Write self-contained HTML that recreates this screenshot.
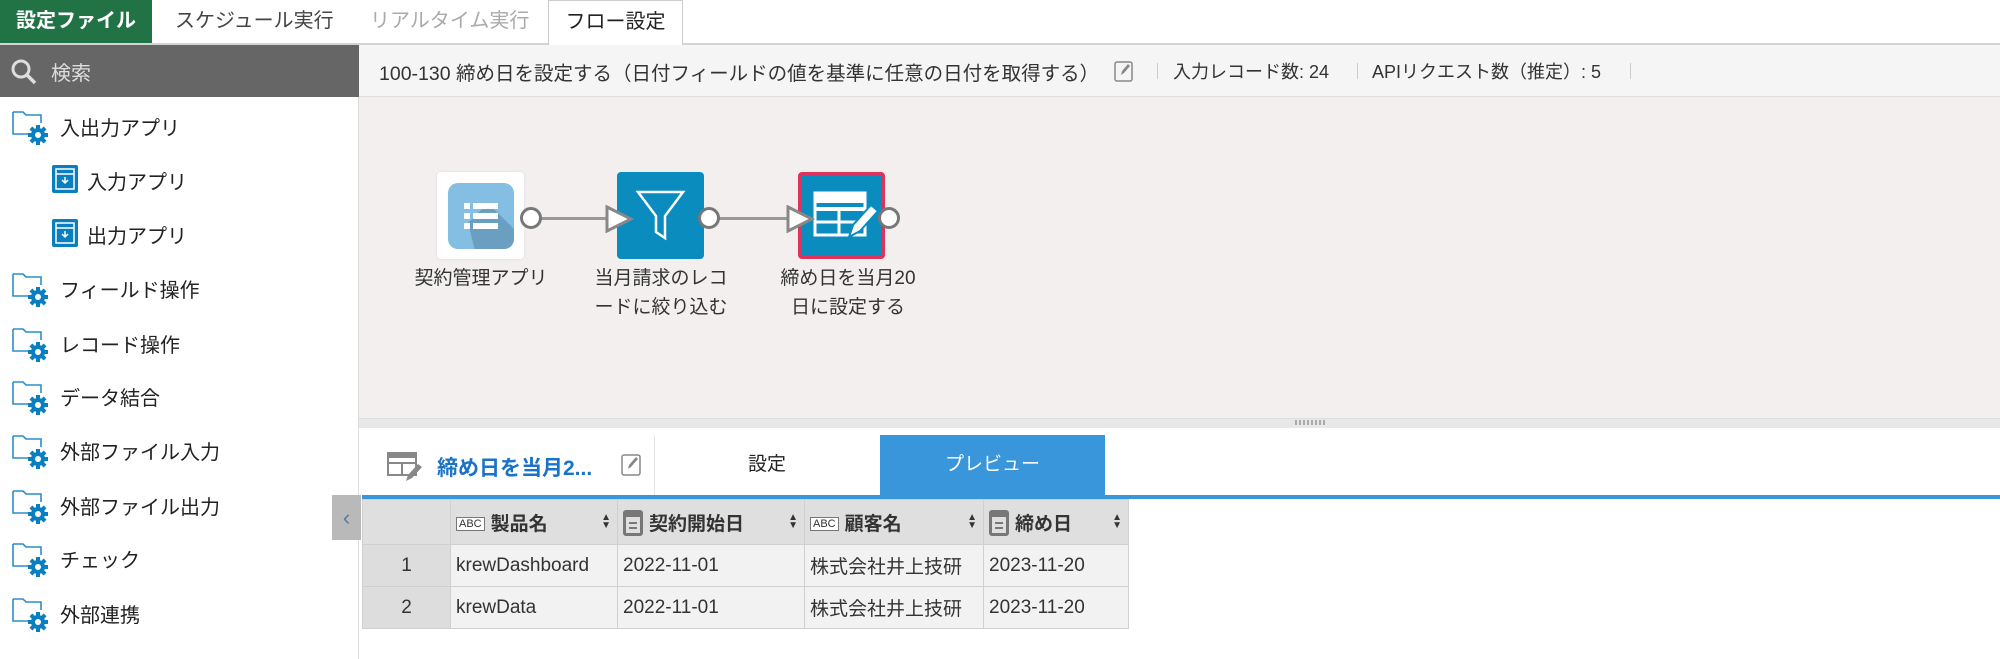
<!DOCTYPE html>
<html><head><meta charset="utf-8"><style>
*{box-sizing:border-box;margin:0;padding:0}
body{width:2000px;height:659px;overflow:hidden;background:#fff;font-family:"Liberation Sans","Noto Sans CJK JP",sans-serif;color:#222;position:relative}
.a{position:absolute;white-space:nowrap}
.tabbar{left:0;top:0;width:2000px;height:45px;background:#fff;border-bottom:2px solid #d4d4d4}
.side{left:0;top:45px;width:359px;height:614px;background:#fff;border-right:1px solid #ddd}
.item{font-size:20px;color:#222}
.hdr{left:359px;top:45px;width:1641px;height:52px;background:#f5f5f5;border-bottom:1px solid #ddd;font-size:18px;color:#333}
.canvas{left:359px;top:97px;width:1641px;height:323px;background:#f2efee}
.node{width:87px;height:87px;border-radius:4px}
.circ{width:22px;height:22px;border-radius:50%;background:#fff;border:3px solid #777}
.lbl{font-size:19px;color:#333;text-align:center;line-height:29px}
table{border-collapse:collapse;font-size:19px}
td,th{height:42px;border:1px solid #d0d0d0;padding:0 5px;white-space:nowrap;color:#333}
th{background:#e0dfdf;font-weight:bold;text-align:left;height:45px;position:relative}
td{background:#f3f2f2}
td.n{background:#dedddd;text-align:center}
.srt{position:absolute;right:6px;top:14px;font-size:10px;line-height:8px;color:#333}
.cal{display:inline-block;width:20px;height:26px;border:3px solid #777;border-top-width:7px;border-radius:3px;vertical-align:-6px;margin-right:6px;background:linear-gradient(#777,#777) 3px 5px/8px 2px no-repeat,linear-gradient(#777,#777) 3px 10px/8px 2px no-repeat}
.abc{font-size:11px;border:1px solid #777;padding:0 2px;font-weight:normal;margin-right:6px;vertical-align:3px;background:#fff}
</style></head><body>
<div class="a tabbar"></div>
<div class="a" style="left:0;top:0;width:152px;height:43px;background:#217346;color:#fff;font-weight:bold;font-size:20px;line-height:43px;text-align:center">設定ファイル</div>
<div class="a" style="left:175px;top:0;line-height:43px;font-size:20px;color:#444">スケジュール実行</div>
<div class="a" style="left:370px;top:0;line-height:43px;font-size:20px;color:#aaa">リアルタイム実行</div>
<div class="a" style="left:548px;top:0;width:135px;height:45px;background:#fff;border:1px solid #ccc;border-bottom:none;line-height:43px;font-size:20px;text-align:center;color:#222">フロー設定</div>

<div class="a side"></div>
<div class="a" style="left:0;top:45px;width:359px;height:52px;background:#666"></div>
<svg class="a" style="left:10px;top:58px" width="28" height="28" viewBox="0 0 28 28"><circle cx="11" cy="11" r="8" fill="none" stroke="#ddd" stroke-width="3"/><line x1="17" y1="17" x2="25" y2="25" stroke="#ddd" stroke-width="3.5"/></svg>
<div class="a" style="left:51px;top:57px;font-size:20px;color:#ddd">検索</div>

<svg width="0" height="0" style="position:absolute"><defs>
<g id="fold"><path d="M2 4h10l3 3h15v8M2 4v22h16" fill="none" stroke="#2a8fc9" stroke-width="1.6"/><g transform="translate(27,27)"><circle r="7" fill="#0a7fc0"/><g fill="#0a7fc0"><rect x="-2" y="-10" width="4" height="20"/><rect x="-10" y="-2" width="20" height="4"/><rect x="-2" y="-10" width="4" height="20" transform="rotate(45)"/><rect x="-2" y="-10" width="4" height="20" transform="rotate(-45)"/></g><circle r="3" fill="#fff"/></g></g>
<g id="app"><rect x="1" y="1" width="26" height="28" rx="2" fill="#0a7fc0"/><rect x="5" y="5" width="18" height="20" fill="none" stroke="#fff" stroke-width="1.5"/><line x1="5" y1="10" x2="23" y2="10" stroke="#fff" stroke-width="1.5"/><path d="M14 13v6m-3-3l3 3 3-3" stroke="#fff" stroke-width="1.5" fill="none"/></g>
</defs></svg>
<svg class="a" style="left:11px;top:108px" width="40" height="40"><use href="#fold"/></svg><div class="a item" style="left:60px;top:112px">入出力アプリ</div>
<svg class="a" style="left:51px;top:164px" width="30" height="30"><use href="#app"/></svg><div class="a item" style="left:87px;top:166px">入力アプリ</div>
<svg class="a" style="left:51px;top:218px" width="30" height="30"><use href="#app"/></svg><div class="a item" style="left:87px;top:220px">出力アプリ</div>
<svg class="a" style="left:11px;top:270px" width="40" height="40"><use href="#fold"/></svg><div class="a item" style="left:60px;top:274px">フィールド操作</div>
<svg class="a" style="left:11px;top:325px" width="40" height="40"><use href="#fold"/></svg><div class="a item" style="left:60px;top:329px">レコード操作</div>
<svg class="a" style="left:11px;top:378px" width="40" height="40"><use href="#fold"/></svg><div class="a item" style="left:60px;top:382px">データ結合</div>
<svg class="a" style="left:11px;top:432px" width="40" height="40"><use href="#fold"/></svg><div class="a item" style="left:60px;top:436px">外部ファイル入力</div>
<svg class="a" style="left:11px;top:487px" width="40" height="40"><use href="#fold"/></svg><div class="a item" style="left:60px;top:491px">外部ファイル出力</div>
<svg class="a" style="left:11px;top:540px" width="40" height="40"><use href="#fold"/></svg><div class="a item" style="left:60px;top:544px">チェック</div>
<svg class="a" style="left:11px;top:595px" width="40" height="40"><use href="#fold"/></svg><div class="a item" style="left:60px;top:599px">外部連携</div>
<div class="a" style="left:332px;top:495px;width:29px;height:45px;background:#b9b9b9;color:#5b7a95;font-size:22px;line-height:45px;text-align:center">‹</div>

<div class="a hdr"></div>
<div class="a" style="left:379px;top:57px;font-size:19.5px;color:#333">100-130 締め日を設定する（日付フィールドの値を基準に任意の日付を取得する）</div>
<svg class="a" style="left:1113px;top:59px" width="22" height="24"><rect x="2" y="3" width="17" height="19" rx="2" fill="none" stroke="#888" stroke-width="1.5"/><path d="M8 16l1-4 6-7 2 2-6 7z" fill="#888"/></svg>
<div class="a" style="left:1157px;top:63px;width:1px;height:16px;background:#ccc"></div>
<div class="a" style="left:1173px;top:58px;font-size:18px;color:#333">入力レコード数: 24</div>
<div class="a" style="left:1357px;top:63px;width:1px;height:16px;background:#ccc"></div>
<div class="a" style="left:1372px;top:58px;font-size:18px;color:#333">APIリクエスト数（推定）: 5</div>
<div class="a" style="left:1630px;top:63px;width:1px;height:16px;background:#ccc"></div>

<div class="a canvas"></div>
<div class="a" style="left:540px;top:217px;width:80px;height:3px;background:#999"></div>
<div class="a" style="left:718px;top:217px;width:80px;height:3px;background:#999"></div>
<div class="a node" style="left:437px;top:172px;background:#fff;box-shadow:0 0 3px #ddd"></div>
<svg class="a" style="left:448px;top:183px" width="66" height="66"><defs><clipPath id="c1"><rect width="66" height="66" rx="10"/></clipPath></defs><g clip-path="url(#c1)"><rect width="66" height="66" fill="#84bfe3"/><path d="M40 20l40 40v20H30L20 40z" fill="#6a9fc2"/><g fill="#fff"><rect x="16" y="20" width="6" height="6"/><rect x="25" y="20" width="25" height="6"/><rect x="16" y="30" width="6" height="6"/><rect x="25" y="30" width="25" height="6"/><rect x="16" y="40" width="6" height="6"/><rect x="25" y="40" width="25" height="6"/></g></g></svg>
<div class="a circ" style="left:520px;top:207px"></div>
<div class="a node" style="left:617px;top:172px;background:#0a8cbf"></div>
<svg class="a" style="left:617px;top:172px" width="87" height="87"><path d="M21 20h45L48 44v22l-9-6V44z" fill="none" stroke="#fff" stroke-width="2.5"/></svg>
<svg class="a" style="left:604px;top:205px" width="30" height="28"><path d="M3 2l24 12L3 26z" fill="#fff" stroke="#888" stroke-width="3"/></svg>
<div class="a circ" style="left:698px;top:207px"></div>
<div class="a node" style="left:798px;top:172px;background:#0a8cbf;border:3px solid #e0335b"></div>
<svg class="a" style="left:801px;top:175px" width="81" height="81"><g fill="none" stroke="#fff" stroke-width="3"><rect x="14" y="18" width="50" height="42"/><line x1="14" y1="34" x2="64" y2="34" stroke-width="4"/><line x1="14" y1="47" x2="64" y2="47"/><line x1="38" y1="34" x2="38" y2="60"/></g><rect x="14" y="18" width="50" height="10" fill="#fff"/><path d="M48 62l4-12 18-20 7 6-18 20z" fill="#fff" stroke="#0a8cbf" stroke-width="2"/></svg>
<svg class="a" style="left:785px;top:205px" width="30" height="28"><path d="M3 2l24 12L3 26z" fill="#fff" stroke="#888" stroke-width="3"/></svg>
<div class="a circ" style="left:878px;top:207px"></div>
<div class="a lbl" style="left:401px;top:264px;width:160px">契約管理アプリ</div>
<div class="a lbl" style="left:581px;top:264px;width:160px">当月請求のレコ<br>ードに絞り込む</div>
<div class="a lbl" style="left:768px;top:264px;width:160px">締め日を当月20<br>日に設定する</div>

<div class="a" style="left:359px;top:418px;width:1641px;height:10px;background:#e8e8e8;border-top:1px solid #ddd"></div>
<div class="a" style="left:1295px;top:420px;width:32px;height:5px;background:repeating-linear-gradient(90deg,#aaa 0 2px,transparent 2px 4px)"></div>

<svg class="a" style="left:386px;top:450px" width="36" height="34"><g fill="none" stroke="#888" stroke-width="2"><rect x="2" y="3" width="28" height="22"/><line x1="2" y1="13" x2="30" y2="13"/><line x1="16" y1="13" x2="16" y2="25"/></g><rect x="2" y="3" width="28" height="5" fill="#888"/><path d="M20 31l2-6 10-11 4 3-10 11z" fill="#888"/></svg>
<div class="a" style="left:437px;top:452px;font-size:21px;font-weight:bold;color:#1a73c8">締め日を当月2...</div>
<svg class="a" style="left:620px;top:452px" width="24" height="26"><rect x="2" y="3" width="18" height="20" rx="2" fill="none" stroke="#888" stroke-width="1.5"/><path d="M8 17l1-4 7-8 2 2-7 8z" fill="#888"/></svg>
<div class="a" style="left:654px;top:435px;width:1px;height:60px;background:#e5e5e5"></div>
<div class="a" style="left:654px;top:435px;width:226px;height:60px;line-height:60px;text-align:center;font-size:19px;color:#222">設定</div>
<div class="a" style="left:880px;top:435px;width:225px;height:60px;line-height:60px;text-align:center;font-size:19px;color:#fff;background:#3a96db">プレビュー</div>
<div class="a" style="left:362px;top:495px;width:1638px;height:4px;background:#3a96db"></div>

<table class="a" style="left:362px;top:499px">
<tr><th style="width:88px"></th>
<th style="width:167px"><span class="abc">ABC</span>製品名<span class="srt">▲<br>▼</span></th>
<th style="width:187px"><span class="cal"></span>契約開始日<span class="srt">▲<br>▼</span></th>
<th style="width:179px"><span class="abc">ABC</span>顧客名<span class="srt">▲<br>▼</span></th>
<th style="width:145px"><span class="cal"></span>締め日<span class="srt">▲<br>▼</span></th></tr>
<tr><td class="n">1</td><td>krewDashboard</td><td>2022-11-01</td><td>株式会社井上技研</td><td>2023-11-20</td></tr>
<tr><td class="n">2</td><td>krewData</td><td>2022-11-01</td><td>株式会社井上技研</td><td>2023-11-20</td></tr>
</table>
</body></html>
